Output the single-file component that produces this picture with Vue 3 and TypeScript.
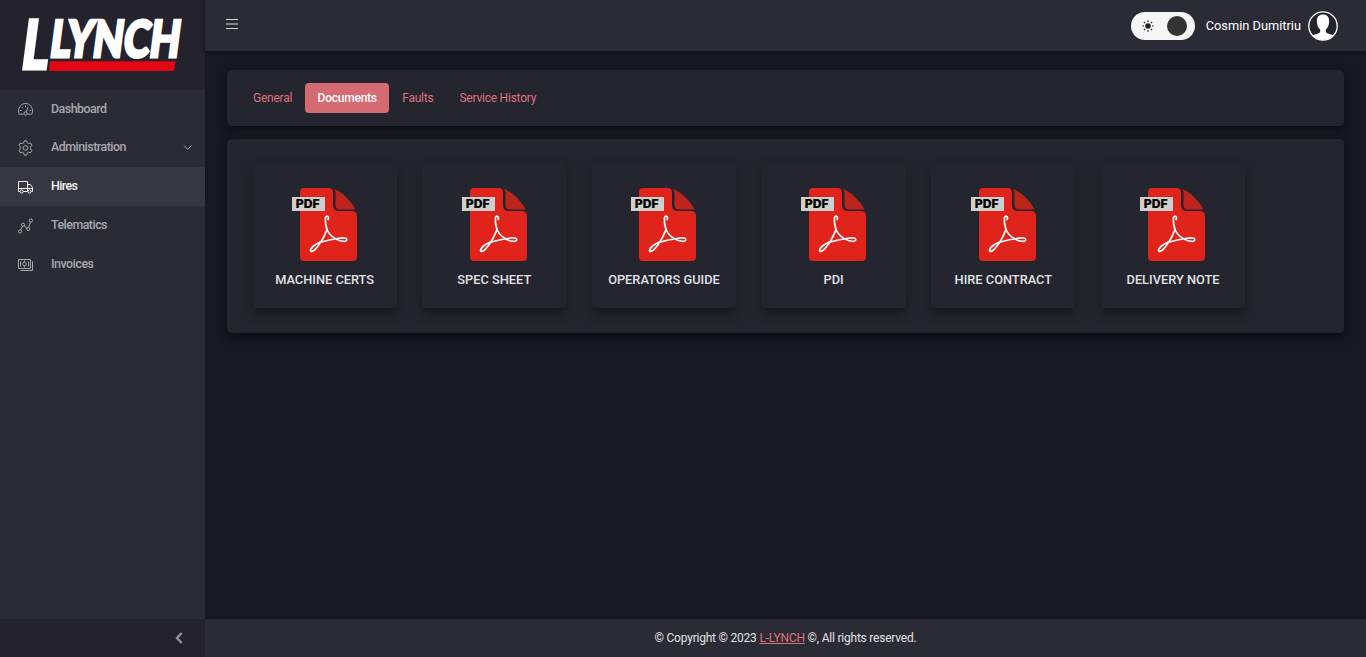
<script setup lang="ts">
import { ref } from 'vue'

interface NavItem { label: string; icon: string; width: number; expandable?: boolean }

const navItems: NavItem[] = [
  { label: 'Dashboard', icon: 'speedometer', width: 56 },
  { label: 'Administration', icon: 'gear', width: 75.5, expandable: true },
  { label: 'Hires', icon: 'truck', width: 27 },
  { label: 'Telematics', icon: 'graph', width: 56.5 },
  { label: 'Invoices', icon: 'money', width: 43 },
]
const activeNav = ref('Hires')

const tabs: string[] = ['General', 'Documents', 'Faults', 'Service History']
const activeTab = ref('Documents')

const documents: string[] = ['MACHINE CERTS', 'SPEC SHEET', 'OPERATORS GUIDE', 'PDI', 'HIRE CONTRACT', 'DELIVERY NOTE']
</script>

<template>
  <div class="app">
    <aside class="sidebar">
      <div class="brand">
        <svg width="200" height="90" viewBox="-21 -18 200 90" role="img" aria-label="L LYNCH">
          <g fill="#fff" stroke="#fff" font-family="Lato, sans-serif" font-weight="900">
            <text transform="translate(-1.500 51.300) skewX(-7.500)" x="0" y="0" font-size="68" textLength="27" lengthAdjust="spacingAndGlyphs" stroke-width="3">L</text>
            <text transform="translate(27.500 38.500) skewX(-7.500)" x="0" y="0" font-size="50.500" textLength="130" lengthAdjust="spacingAndGlyphs" stroke-width="3">LYNCH</text>
          </g>
          <path d="M29 43.300H154.500L153 53H28Z" fill="#e30613" />
        </svg>
      </div>
      <nav class="nav">
        <a v-for="item in navItems" :key="item.label" class="nav-item" :class="{ active: activeNav === item.label }" @click="activeNav = item.label">
          <svg class="nav-icon" width="15" height="16" viewBox="0.500 0 15 16" fill="none" stroke="currentColor">
            <g v-if="item.icon === 'speedometer'">
              <path d="M1.700 13.200Q1 11.800 1 10C1 5.800 4 2.500 8 2.500S15 5.800 15 10Q15 11.800 14.300 13.200H10M1.700 13.200H6" />
              <circle cx="8" cy="12.500" r="1.600" />
              <path d="M8.500 11L10.700 6M2.500 9.500h1.500M4.300 6l1 1M8 4.500V6M12 9.500h1.500" />
            </g>
            <g v-else-if="item.icon === 'gear'">
              <path d="M6.800.8H9.200L9.700 2.800L11.100 3.600L13.100 3L14.500 5.200L13.100 6.800V8.900L14.500 10.600L13.100 12.800L11.100 12.200L9.700 13L9.200 15.200H6.800L6.200 13L4.800 12.200L2.700 12.800L1.500 10.600L2.800 8.900V6.800L1.500 5.200L2.700 3L4.800 3.600L6.200 2.800Z" stroke-linejoin="round" />
              <circle cx="8" cy="8" r="2.300" />
            </g>
            <g v-else-if="item.icon === 'truck'">
              <path d="M2.500 12.500H1V2.500H10V12.500H5.700M10 5.500H12.800L15 8.500V12.500H13.500M1 9.500H15" />
              <circle cx="4.100" cy="12.500" r="1.600" /><circle cx="11.900" cy="12.500" r="1.600" />
            </g>
            <g v-else-if="item.icon === 'graph'">
              <circle cx="2.600" cy="13.400" r="1.600" /><circle cx="5.500" cy="6.800" r="1.600" />
              <circle cx="10.700" cy="11" r="1.600" /><circle cx="13.400" cy="2.500" r="1.600" />
              <path d="M3.300 11.900L4.900 8.300M6.700 7.800L9.400 10M11.200 9.400L12.900 4.100" />
            </g>
            <g v-else>
              <path d="M1 2.500H13V11.500H1ZM15 4.500V13.500H3M3 4.500V9.500M11 4.500V9.500M7 3.500V5M7 9V10.500" />
              <circle cx="7" cy="7" r="1.900" />
            </g>
          </svg>
          <svg class="nav-label" :width="item.width + 2" height="18"><text x="0" y="13" :textLength="item.width" fill="currentColor">{{ item.label }}</text></svg>
          <svg v-if="item.expandable" class="chevron" width="10" height="7" viewBox="0 0 10 7" fill="none" stroke="currentColor"><path d="M1 1.500L4.800 5.300L8.500 1.500" /></svg>
        </a>
      </nav>
      <button class="collapse" aria-label="Collapse sidebar">
        <svg width="8" height="12" viewBox="0 0 8 12" fill="none" stroke="#8a93a2" stroke-width="2.400"><path d="M6.700 1L2 6L6.700 11" /></svg>
      </button>
    </aside>

    <div class="page">
      <header class="topbar">
        <button class="menu" aria-label="Menu"><i></i><i class="mid"></i><i></i></button>
        <div class="account">
          <div class="switch">
            <svg width="12" height="12" viewBox="0 0 12 12" fill="#222" stroke="#222" stroke-width="1.200">
              <circle cx="6" cy="6" r="2.800" stroke="none" />
              <path d="M6 .3V2M6 10V11.700M.3 6H2M10 6H11.700M1.900 1.900L3.100 3.100M8.900 8.900L10.100 10.100M1.900 10.100L3.100 8.900M8.900 3.100L10.100 1.900" />
            </svg>
            <span class="knob"></span>
          </div>
          <span class="user">Cosmin Dumitriu</span>
          <svg class="avatar" width="30" height="30" viewBox="0 0 30 30">
            <circle cx="15" cy="15" r="14.200" fill="#23232c" stroke="#fff" stroke-width="1.300" />
            <path d="M15 3.500C10.500 3.500 8.600 6.500 8.900 10.500C9 14.500 10.400 17.100 12.200 18.600V21C11.300 22.600 7.500 23 4.700 24.600A14.200 14.200 0 0 0 25.300 24.600C22.500 23 18.700 22.600 17.800 21V18.600C19.600 17.100 21 14.500 21.100 10.500C21.400 6.500 19.500 3.500 15 3.500Z" fill="#fff" />
          </svg>
        </div>
      </header>

      <main class="content">
        <section class="card tabs">
          <button v-for="tab in tabs" :key="tab" class="tab" :class="{ active: activeTab === tab }" @click="activeTab = tab">{{ tab }}</button>
        </section>
        <section class="card documents">
          <article v-for="doc in documents" :key="doc" class="tile">
            <svg class="pdf" width="66" height="74" viewBox="0 0 66 74">
              <path d="M12 0H36.500Q41 0 41 4.500V17Q41 23 47 23H60Q65 23.500 65 28V69Q65 73 61 73H12Q8 73 8 69V4Q8 0 12 0Z" fill="#e0241b" />
              <path d="M42 1C50 3.500 60 14 63.500 21.500H48Q43.500 21.500 43.500 17V5Q43.500 2.500 42 1Z" fill="#bd251c" />
              <rect y="9" width="33" height="14" fill="#cfd0ce" />
              <text x="3.700" y="20" textLength="24" lengthAdjust="spacingAndGlyphs" class="pdf-label">PDF</text>
              <g fill="none" stroke="#fff" stroke-linecap="round" stroke-linejoin="round">
                <path d="M36.200 31.500C37.300 28 33.900 26.800 33.400 30C33.100 33.500 33.900 38 35 41.500" stroke-width="1.700" />
                <path d="M35 41.500C32.500 48 28 56 24 60.500C21.500 63.500 18.700 64.200 18.500 62.500C18.300 60 23 56.300 27.500 54.500" stroke-width="1.800" />
                <path d="M27.500 54.500C34 52.500 41 51 47 50.200C52 49.500 55 50 54.700 51.700C54.500 54 49 54 43.500 50.800C39.500 48.500 36.700 45.500 35 41.500" stroke-width="1.600" />
              </g>
            </svg>
            <h2>{{ doc }}</h2>
          </article>
        </section>
      </main>

      <footer class="footer"><span>© Copyright © 2023 <a href="#">L-LYNCH</a> ©, All rights reserved.</span></footer>
    </div>
  </div>
</template>

<style>
html, body { margin: 0; background: #181823; }
</style>

<style scoped>
* { box-sizing: border-box; }
.app { display: flex; height: 657px; overflow: hidden; font: 400 12.8px/19.2px Roboto, sans-serif; color: #e1e1e3; }
button { border: 0; background: none; padding: 0; font: inherit; }
.sidebar { width: 205px; display: flex; flex-direction: column; background: #2b2b36; flex: none; }
.brand { height: 90px; background: #23222d; }
.brand svg { display: block; }
.nav { flex: 1; color: #a8a7ad; }
.nav-item { height: 39px; display: flex; align-items: center; padding-left: 18px; cursor: pointer; }
.nav-item:first-child { height: 38px; }
.nav-item.active { background: #373741; color: #efeff0; }
.nav-icon { margin-right: 17px; flex: none; }
.nav-label { margin-left: 1.300px; overflow: visible; font-size: 12.400px; font-weight: 500; }
.nav-item:not(:first-child) .nav-label { margin-bottom: 2px; }
.chevron { margin-left: auto; margin-right: 12px; }
.collapse { height: 38px; background: #23222d; display: flex; justify-content: flex-end; align-items: center; padding-right: 22px; }
.page { flex: 1; min-width: 0; display: flex; flex-direction: column; }
.topbar { height: 51px; background: #2b2b36; display: flex; align-items: flex-start; justify-content: space-between; padding: 11px 28px 0 21px; box-shadow: 0 1px 3px #0f0f17; }
.menu { width: 12px; padding-top: 8px; display: flex; flex-direction: column; gap: 3px; }
.menu i { height: 1px; background: #d2d2d5; }
.menu .mid { height: 2px; background: #85848d; }
.account { display: flex; align-items: center; }
.switch { width: 64px; height: 28px; border-radius: 14px; background: #f5f5f5; display: flex; align-items: center; justify-content: space-between; padding: 0 8px 0 11px; }
.knob { width: 20px; height: 20px; border-radius: 50%; background: #333; }
.user { margin: 0 7px 0 11px; color: #fff; white-space: nowrap; }
.content { flex: 1; padding: 19px 22px 0; }
.card { background: #25252f; border-radius: 5px; box-shadow: 0 3px 9px #0c0c13; }
.tabs { height: 56px; margin-bottom: 13px; padding: 13px; display: flex; }
.tab { height: 30px; padding: 2px 13px 0; color: #df727c; font-size: 12px; letter-spacing: -.23px; border-radius: 4px; white-space: nowrap; }
.tab.active { width: 84px; padding-left: 0; padding-right: 0; background: #d46a72; color: #fff; font-weight: 500; }
.documents { height: 194px; padding: 25px 25.600px; display: flex; gap: 25.700px; }
.tile { width: 144px; height: 144px; flex: none; display: flex; flex-direction: column; align-items: center; padding-top: 24px; border-radius: 4px; box-shadow: 0 5px 12px #17181d; }
.pdf { display: block; margin-left: .6px; }
.pdf-label { font: 900 11.500px Inter, sans-serif; fill: #050505; }
h2 { margin: 8px 0 0; font-size: 12.800px; line-height: 19px; font-weight: 500; white-space: nowrap; }
.footer { height: 38px; padding-top: 1px; background: #2b2b36; display: flex; justify-content: center; align-items: center; font-size: 12px; letter-spacing: -.22px; }
.footer a { color: #df727c; }
</style>
